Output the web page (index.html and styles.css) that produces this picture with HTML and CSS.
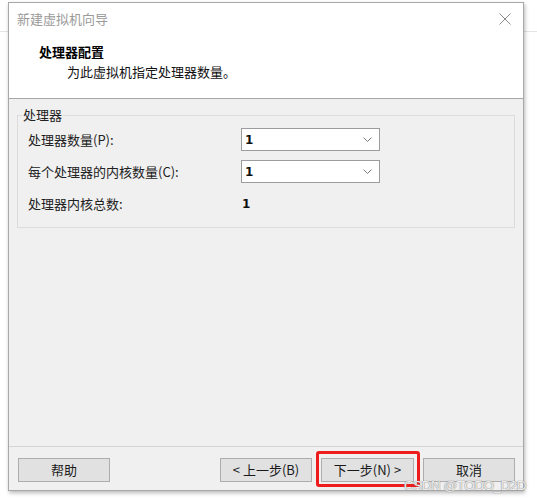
FILE: index.html
```html
<!DOCTYPE html>
<html lang="zh-CN">
<head>
<meta charset="utf-8">
<title>新建虚拟机向导</title>
<link rel="stylesheet" href="styles.css">
</head>
<body>
<div class="dialog">
  <div class="titlebar">
    <span class="title">新建虚拟机向导</span>
    <svg class="close" width="12" height="12" viewBox="0 0 12 12"><path d="M0.5 0.5 L11.5 11.5 M11.5 0.5 L0.5 11.5" stroke="#8c8c8c" stroke-width="1" fill="none"/></svg>
  </div>
  <div class="header">
    <div class="heading">处理器配置</div>
    <div class="subheading">为此虚拟机指定处理器数量。</div>
  </div>
  <div class="content">
    <fieldset class="group">
      <legend>处理器</legend>
      <div class="rows">
        <span class="label">处理器数量(P):</span>
        <div class="combo"><span class="val">1</span><svg width="9" height="5" viewBox="0 0 9 5"><path d="M0.5 0.5 L4.5 4.5 L8.5 0.5" stroke="#7a7a7a" fill="none"/></svg></div>
        <span class="label">每个处理器的内核数量(C):</span>
        <div class="combo"><span class="val">1</span><svg width="9" height="5" viewBox="0 0 9 5"><path d="M0.5 0.5 L4.5 4.5 L8.5 0.5" stroke="#7a7a7a" fill="none"/></svg></div>
        <span class="label">处理器内核总数:</span>
        <span class="plain">1</span>
      </div>
    </fieldset>
  </div>
  <div class="footer">
    <button class="btn">帮助</button>
    <span class="spacer"></span>
    <button class="btn">&lt; 上一步(B)</button>
    <button class="btn next">下一步(N) &gt;</button>
    <button class="btn">取消</button>
  </div>
</div>
<div class="watermark">CSDN @TODO_D2D</div>
</body>
</html>
```
FILE: styles.css
```css
html, body {
  margin: 0;
  padding: 0;
}
body {
  width: 537px;
  height: 500px;
  background: #ffffff linear-gradient(to bottom, transparent 31px, #e4e4e4 31px, #e4e4e4 32px, transparent 32px);
  font-family: "Noto Sans CJK SC", "Liberation Sans", sans-serif;
  font-size: 13px;
  color: #1a1a1a;
  position: relative;
  overflow: hidden;
}
.dialog {
  box-sizing: border-box;
  margin: 2px 0 0 8px;
  width: 516px;
  height: 489px;
  border: 1px solid #a8a8a8;
  background: #f0f0f0;
  display: flex;
  flex-direction: column;
  box-shadow: 1px 2px 4px rgba(0, 0, 0, 0.28);
}
.titlebar {
  height: 30px;
  background: #fff;
  display: flex;
  align-items: center;
  justify-content: space-between;
  padding: 1px 12px 0 8px;
  box-sizing: border-box;
}
.title {
  color: #9a9a9a;
  font-size: 13px;
  line-height: 16px;
}
.close {
  display: block;
}
.header {
  background: #fff;
  height: 66px;
  box-sizing: border-box;
  padding: 10px 0 0 30px;
  border-bottom: 1px solid #a6a6a6;
}
.heading {
  font-weight: bold;
  font-size: 13px;
  line-height: 18px;
  color: #000;
}
.subheading {
  margin-top: 2px;
  padding-left: 28px;
  line-height: 18px;
  color: #111;
}
.content {
  flex: 1;
  padding: 8px 8px 0 8px;
}
.group {
  margin: 0;
  padding: 5px 10px 12px 10px;
  border: 1px solid #dcdcdc;
}
.group legend {
  padding: 0 1px;
  margin-left: -6px;
  line-height: 16px;
  color: #222;
}
.rows {
  display: grid;
  grid-template-columns: 213px 139px;
  grid-auto-rows: 23px;
  row-gap: 9px;
  align-items: center;
}
.label {
  color: #222;
  line-height: 16px;
}
.combo {
  box-sizing: border-box;
  height: 23px;
  width: 139px;
  border: 1px solid #9c9c9c;
  background: #fff;
  display: flex;
  align-items: center;
  justify-content: space-between;
  padding: 0 7px 0 3px;
}
.val, .plain {
  font-family: "DejaVu Sans", "Liberation Sans", sans-serif;
  font-size: 12px;
  font-weight: bold;
  color: #111;
}
.plain {
  padding-left: 1px;
}
.footer {
  border-top: 1px solid #d4d4d4;
  height: 44px;
  box-sizing: border-box;
  padding: 11px 8px 0 9px;
  display: flex;
  gap: 9px;
}
.spacer {
  flex: 1;
}
.btn {
  width: 92px;
  height: 24px;
  box-sizing: border-box;
  border: 1px solid #adadad;
  background: #e1e1e1;
  font-family: "Noto Sans CJK SC", "Liberation Sans", sans-serif;
  font-size: 13px;
  color: #1a1a1a;
  padding: 0;
  line-height: 20px;
}
.btn.next {
  width: 93px;
  position: relative;
}
.btn.next::after {
  content: "";
  position: absolute;
  left: -6px;
  top: -8px;
  right: -7px;
  bottom: -6px;
  border: 3px solid #ee1c1c;
  border-radius: 3px;
}
.watermark {
  position: absolute;
  left: 404px;
  top: 478px;
  white-space: nowrap;
  font-family: "Liberation Sans", sans-serif;
  font-size: 13.5px;
  line-height: 16px;
  letter-spacing: -0.5px;
  color: rgba(255, 255, 255, 0.85);
  text-shadow: 0 0 1px #8a8a8a, 0 0 1px #8a8a8a;
}
```
